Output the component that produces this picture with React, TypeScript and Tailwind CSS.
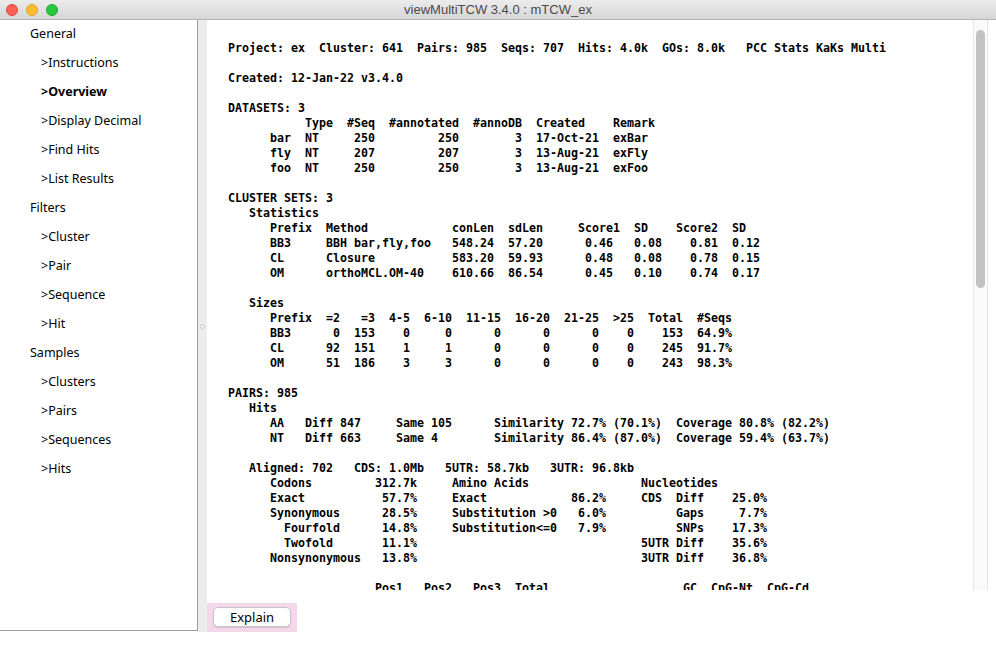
import React from 'react';

// place each text piece at a fixed column, like the fixed-width report in the app
const at = (...parts: [number, string][]) =>
  parts.reduce((s, [col, text]) => s.padEnd(col) + text, '');

const report = [
  'Project: ex  Cluster: 641  Pairs: 985  Seqs: 707  Hits: 4.0k  GOs: 8.0k   PCC Stats KaKs Multi',
  '',
  'Created: 12-Jan-22 v3.4.0',
  '',
  'DATASETS: 3',
  at([11, 'Type'], [17, '#Seq'], [23, '#annotated'], [35, '#annoDB'], [44, 'Created'], [55, 'Remark']),
  at([6, 'bar'], [11, 'NT'], [18, '250'], [30, '250'], [41, '3'], [44, '17-Oct-21'], [55, 'exBar']),
  at([6, 'fly'], [11, 'NT'], [18, '207'], [30, '207'], [41, '3'], [44, '13-Aug-21'], [55, 'exFly']),
  at([6, 'foo'], [11, 'NT'], [18, '250'], [30, '250'], [41, '3'], [44, '13-Aug-21'], [55, 'exFoo']),
  '',
  'CLUSTER SETS: 3',
  at([3, 'Statistics']),
  at([6, 'Prefix'], [14, 'Method'], [32, 'conLen'], [40, 'sdLen'], [50, 'Score1'], [58, 'SD'], [64, 'Score2'], [72, 'SD']),
  at([6, 'BB3'], [14, 'BBH bar,fly,foo'], [32, '548.24'], [40, '57.20'], [51, '0.46'], [58, '0.08'], [66, '0.81'], [72, '0.12']),
  at([6, 'CL'], [14, 'Closure'], [32, '583.20'], [40, '59.93'], [51, '0.48'], [58, '0.08'], [66, '0.78'], [72, '0.15']),
  at([6, 'OM'], [14, 'orthoMCL.OM-40'], [32, '610.66'], [40, '86.54'], [51, '0.45'], [58, '0.10'], [66, '0.74'], [72, '0.17']),
  '',
  at([3, 'Sizes']),
  at([6, 'Prefix'], [14, '=2'], [19, '=3'], [23, '4-5'], [28, '6-10'], [34, '11-15'], [41, '16-20'], [48, '21-25'], [55, '>25'], [60, 'Total'], [67, '#Seqs']),
  at([6, 'BB3'], [15, '0'], [18, '153'], [25, '0'], [31, '0'], [38, '0'], [45, '0'], [52, '0'], [57, '0'], [62, '153'], [67, '64.9%']),
  at([6, 'CL'], [14, '92'], [18, '151'], [25, '1'], [31, '1'], [38, '0'], [45, '0'], [52, '0'], [57, '0'], [62, '245'], [67, '91.7%']),
  at([6, 'OM'], [14, '51'], [18, '186'], [25, '3'], [31, '3'], [38, '0'], [45, '0'], [52, '0'], [57, '0'], [62, '243'], [67, '98.3%']),
  '',
  'PAIRS: 985',
  at([3, 'Hits']),
  at([6, 'AA'], [11, 'Diff 847'], [24, 'Same 105'], [38, 'Similarity 72.7% (70.1%)'], [64, 'Coverage 80.8% (82.2%)']),
  at([6, 'NT'], [11, 'Diff 663'], [24, 'Same 4'], [38, 'Similarity 86.4% (87.0%)'], [64, 'Coverage 59.4% (63.7%)']),
  '',
  at([3, 'Aligned: 702'], [18, 'CDS: 1.0Mb'], [31, '5UTR: 58.7kb'], [46, '3UTR: 96.8kb']),
  at([6, 'Codons'], [21, '312.7k'], [32, 'Amino Acids'], [59, 'Nucleotides']),
  at([6, 'Exact'], [22, '57.7%'], [32, 'Exact'], [49, '86.2%'], [59, 'CDS'], [64, 'Diff'], [72, '25.0%']),
  at([6, 'Synonymous'], [22, '28.5%'], [32, 'Substitution >0'], [50, '6.0%'], [64, 'Gaps'], [73, '7.7%']),
  at([8, 'Fourfold'], [22, '14.8%'], [32, 'Substitution<=0'], [50, '7.9%'], [64, 'SNPs'], [72, '17.3%']),
  at([8, 'Twofold'], [22, '11.1%'], [59, '5UTR'], [64, 'Diff'], [72, '35.6%']),
  at([6, 'Nonsynonymous'], [22, '13.8%'], [59, '3UTR'], [64, 'Diff'], [72, '36.8%']),
  '',
  at([21, 'Pos1'], [28, 'Pos2'], [35, 'Pos3'], [41, 'Total'], [65, 'GC'], [69, 'CpG-Nt'], [77, 'CpG-Cd']),
].join('\n');

const menu = [
  { label: 'General', level: 0 },
  { label: '>Instructions', level: 1 },
  { label: '>Overview', level: 1, active: true },
  { label: '>Display Decimal', level: 1 },
  { label: '>Find Hits', level: 1 },
  { label: '>List Results', level: 1 },
  { label: 'Filters', level: 0 },
  { label: '>Cluster', level: 1 },
  { label: '>Pair', level: 1 },
  { label: '>Sequence', level: 1 },
  { label: '>Hit', level: 1 },
  { label: 'Samples', level: 0 },
  { label: '>Clusters', level: 1 },
  { label: '>Pairs', level: 1 },
  { label: '>Sequences', level: 1 },
  { label: '>Hits', level: 1 },
];

const TitleBar = () => (
  <div className="flex h-[20px] shrink-0 items-center border-b border-[#b3b3b3] bg-gradient-to-b from-[#ececec] to-[#d6d6d6]">
    <div className="flex w-[64px] items-center gap-[8px] pl-[6px]">
      <span className="h-[12px] w-[12px] rounded-full border border-[#e0443e] bg-[#fe5f57]" />
      <span className="h-[12px] w-[12px] rounded-full border border-[#dea123] bg-[#febc2e]" />
      <span className="h-[12px] w-[12px] rounded-full border border-[#1aab29] bg-[#28c840]" />
    </div>
    <div className="flex-1 text-center text-[13px] leading-none text-[#4a4a4a] [font-family:'Liberation_Sans',Arial,sans-serif]">
      viewMultiTCW 3.4.0 : mTCW_ex
    </div>
    <div className="w-[64px]" />
  </div>
);

export default function App() {
  return (
    <div className="flex h-[645px] w-[996px] flex-col overflow-hidden bg-white">
      <TitleBar />
      <div className="flex h-[612px] shrink-0">
        {/* left menu */}
        <div className="h-[611px] w-[198px] shrink-0 border-r border-b border-[#9c9c9c] bg-white pt-[1px] text-[12.5px] text-black [font-family:'Noto_Sans',sans-serif]">
          {menu.map((item) => (
            <div
              key={item.label}
              className={`h-[29px] leading-[26px] ${item.level === 0 ? 'pl-[30px]' : 'pl-[41px]'} ${item.active ? 'font-bold' : ''}`}
            >
              {item.label}
            </div>
          ))}
        </div>

        {/* split pane divider */}
        <div className="flex w-[9px] shrink-0 items-center justify-center bg-[#ececec]">
          <span className="h-[5px] w-[5px] rounded-full border border-[#c4c4c4] bg-[#f6f6f6]" />
        </div>

        {/* main panel */}
        <div className="flex min-w-0 flex-1 flex-col bg-white">
          <div className="flex h-[570px] shrink-0">
            <div className="min-w-0 flex-1 overflow-hidden">
              <pre className="pl-[21px] pt-[21px] text-[11.63px] font-bold leading-[15px] text-black [font-family:'DejaVu_Sans_Mono',monospace]">
                {report}
              </pre>
            </div>
            <div className="mr-[8px] w-[15px] shrink-0 border-x border-[#e6e6e6] bg-[#fafafa] pt-[10px]">
              <div className="mx-auto h-[258px] w-[9px] rounded-full bg-[#c2c2c2]" />
            </div>
          </div>
          <div className="flex h-[42px] items-start pt-[13px]">
            <div className="flex h-[29px] w-[90px] items-start bg-[#f4d7ea] pl-[6px] pt-[4px]">
              <button className="h-[20px] w-[78px] rounded-[5px] border border-[#c6c6c6] bg-white text-[13px] leading-none text-black shadow-[0_1px_1px_rgba(0,0,0,0.12)] [font-family:'Noto_Sans',sans-serif]">
                Explain
              </button>
            </div>
          </div>
        </div>
      </div>
    </div>
  );
}
